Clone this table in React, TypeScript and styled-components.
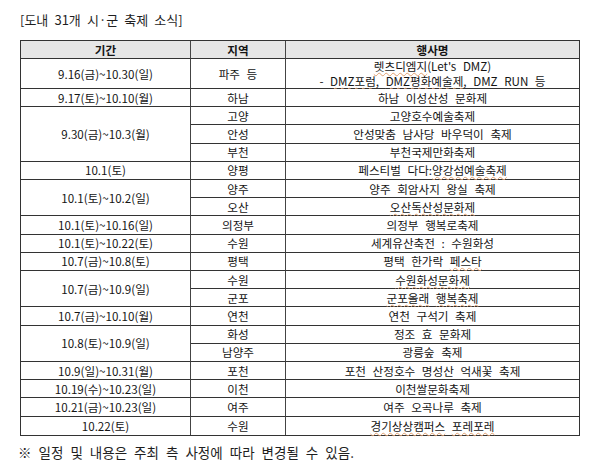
import React from "react";
import styled, { createGlobalStyle } from "styled-components";

const Global = createGlobalStyle`
  html, body { margin: 0; padding: 0; background: #ffffff; }
  body { font-family: "Noto Sans CJK KR", "Noto Sans", sans-serif; color: #1a1a1a; }
`;

const Page = styled.div`
  width: 600px;
  height: 463px;
  box-sizing: border-box;
  padding: 10px 20px 0 20px;
  background: #fff;
`;

const Title = styled.div`
  font-size: 13px;
  line-height: 20px;
  height: 20px;
  word-spacing: 3.2px;
  color: #1f1f1f;
  margin-bottom: 10px;
  white-space: nowrap;
`;

const Grid = styled.div`
  display: grid;
  width: 560px;
  box-sizing: border-box;
  border: 1px solid #333;
  grid-template-columns: 170px 95px 1fr;
  grid-template-rows: 18px 30px repeat(19, 18.21px);
`;

const Cell = styled.div<{ $col: number; $span?: number; $head?: boolean; $last?: boolean; $lastRow?: boolean }>`
  grid-column: ${(p) => p.$col};
  grid-row: span ${(p) => p.$span ?? 1};
  box-sizing: border-box;
  display: flex;
  flex-direction: column;
  align-items: center;
  justify-content: center;
  text-align: center;
  font-size: 11.6px;
  line-height: 14px;
  word-spacing: 4px;
  white-space: nowrap;
  color: #141414;
  border-right: ${(p) => (p.$last ? "none" : "1px solid #444")};
  border-bottom: ${(p) => (p.$lastRow ? "none" : "1px solid #333")};
  background: ${(p) => (p.$head ? "#e6e6e6" : "#fff")};
  font-weight: ${(p) => (p.$head ? 700 : 400)};
  overflow: visible;
`;

const Line = styled.div`
  display: block;
  line-height: 14.5px;
  height: 14.5px;
`;

const Sq = styled.span`
  text-decoration-line: underline;
  text-decoration-style: wavy;
  text-decoration-color: #e0a070;
  text-decoration-thickness: 1px;
  text-underline-offset: 1px;
`;

const Note = styled.div`
  margin-top: 6px;
  margin-left: -2px;
  font-size: 13.5px;
  line-height: 20px;
  word-spacing: 4px;
  color: #1f1f1f;
  white-space: nowrap;
`;

type Item = { region: string; event: React.ReactNode };
type Group = { period: string; items: Item[] };

const groups: Group[] = [
  {
    period: "9.16(금)~10.30(일)",
    items: [
      {
        region: "파주 등",
        event: (
          <>
            <Line>
              <Sq>렛츠디엠지</Sq>(Let's DMZ)
            </Line>
            <Line>
              - <Sq>DMZ포럼</Sq>, <Sq>DMZ평화예술제</Sq>, DMZ RUN 등
            </Line>
          </>
        ),
      },
    ],
  },
  { period: "9.17(토)~10.10(월)", items: [{ region: "하남", event: "하남 이성산성 문화제" }] },
  {
    period: "9.30(금)~10.3(월)",
    items: [
      { region: "고양", event: "고양호수예술축제" },
      { region: "안성", event: "안성맞춤 남사당 바우덕이 축제" },
      { region: "부천", event: "부천국제만화축제" },
    ],
  },
  {
    period: "10.1(토)",
    items: [
      {
        region: "양평",
        event: (
          <span>
            페스티벌 다다:<Sq>양강섬예술축제</Sq>
          </span>
        ),
      },
    ],
  },
  {
    period: "10.1(토)~10.2(일)",
    items: [
      { region: "양주", event: "양주 회암사지 왕실 축제" },
      { region: "오산", event: <Sq>오산독산성문화제</Sq> },
    ],
  },
  { period: "10.1(토)~10.16(일)", items: [{ region: "의정부", event: "의정부 행복로축제" }] },
  { period: "10.1(토)~10.22(토)", items: [{ region: "수원", event: "세계유산축전 : 수원화성" }] },
  {
    period: "10.7(금)~10.8(토)",
    items: [
      {
        region: "평택",
        event: (
          <span>
            평택 한가락 <Sq>페스타</Sq>
          </span>
        ),
      },
    ],
  },
  {
    period: "10.7(금)~10.9(일)",
    items: [
      { region: "수원", event: <Sq>수원화성문화제</Sq> },
      {
        region: "군포",
        event: (
          <span>
            <Sq>군포올래</Sq> <Sq>행복축제</Sq>
          </span>
        ),
      },
    ],
  },
  { period: "10.7(금)~10.10(월)", items: [{ region: "연천", event: "연천 구석기 축제" }] },
  {
    period: "10.8(토)~10.9(일)",
    items: [
      { region: "화성", event: "정조 효 문화제" },
      { region: "남양주", event: "광릉숲 축제" },
    ],
  },
  { period: "10.9(일)~10.31(월)", items: [{ region: "포천", event: "포천 산정호수 명성산 억새꽃 축제" }] },
  { period: "10.19(수)~10.23(일)", items: [{ region: "이천", event: "이천쌀문화축제" }] },
  { period: "10.21(금)~10.23(일)", items: [{ region: "여주", event: "여주 오곡나루 축제" }] },
  {
    period: "10.22(토)",
    items: [
      {
        region: "수원",
        event: (
          <span>
            <Sq>경기상상캠퍼스</Sq> <Sq>포레포레</Sq>
          </span>
        ),
      },
    ],
  },
];

export default function App() {
  const lastGroup = groups.length - 1;
  return (
    <>
      <Global />
      <Page>
        <Title>[도내 31개 시·군 축제 소식]</Title>
        <Grid>
          <Cell $col={1} $head>
            기간
          </Cell>
          <Cell $col={2} $head>
            지역
          </Cell>
          <Cell $col={3} $head $last>
            행사명
          </Cell>
          {groups.map((g, gi) =>
            g.items.map((it, ii) => {
              const lastRow = gi === lastGroup && ii === g.items.length - 1;
              return (
                <React.Fragment key={`${gi}-${ii}`}>
                  {ii === 0 && (
                    <Cell $col={1} $span={g.items.length} $lastRow={gi === lastGroup}>
                      {g.period}
                    </Cell>
                  )}
                  <Cell $col={2} $lastRow={lastRow}>
                    {it.region}
                  </Cell>
                  <Cell $col={3} $last $lastRow={lastRow}>
                    {it.event}
                  </Cell>
                </React.Fragment>
              );
            })
          )}
        </Grid>
        <Note>※ 일정 및 내용은 주최 측 사정에 따라 변경될 수 있음.</Note>
      </Page>
    </>
  );
}
